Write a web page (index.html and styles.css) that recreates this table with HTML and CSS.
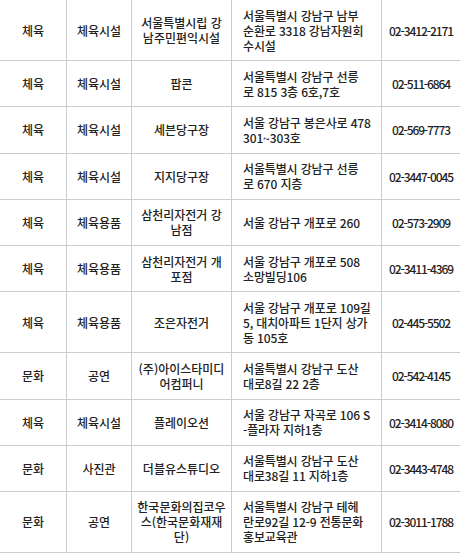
FILE: index.html
```html
<!DOCTYPE html>
<html lang="ko">
<head>
<meta charset="utf-8">
<title>강남구 체육·문화 시설 목록</title>
<link rel="stylesheet" href="styles.css">
</head>
<body>
<table class="list">
  <tbody>
    <tr><td>체육</td><td>체육시설</td><td>서울특별시립 강<br>남주민편익시설</td><td>서울특별시 강남구 남부<br>순환로 3318 강남자원회<br>수시설</td><td>02-3412-2171</td></tr>
    <tr><td>체육</td><td>체육시설</td><td>팝콘</td><td>서울특별시 강남구 선릉<br>로 815 3층 6호,7호</td><td>02-511-6864</td></tr>
    <tr><td>체육</td><td>체육시설</td><td>세븐당구장</td><td>서울 강남구 봉은사로 478<br>301~303호</td><td>02-569-7773</td></tr>
    <tr><td>체육</td><td>체육시설</td><td>지지당구장</td><td>서울특별시 강남구 선릉<br>로 670 지층</td><td>02-3447-0045</td></tr>
    <tr><td>체육</td><td>체육용품</td><td>삼천리자전거 강<br>남점</td><td>서울 강남구 개포로 260</td><td>02-573-2909</td></tr>
    <tr><td>체육</td><td>체육용품</td><td>삼천리자전거 개<br>포점</td><td>서울 강남구 개포로 508<br>소망빌딩106</td><td>02-3411-4369</td></tr>
    <tr><td>체육</td><td>체육용품</td><td>조은자전거</td><td>서울 강남구 개포로 109길<br>5, 대치아파트 1단지 상가<br>동 105호</td><td>02-445-5502</td></tr>
    <tr><td>문화</td><td>공연</td><td>(주)아이스타미디<br>어컴퍼니</td><td>서울특별시 강남구 도산<br>대로8길 22 2층</td><td>02-542-4145</td></tr>
    <tr><td>체육</td><td>체육시설</td><td>플레이오션</td><td>서울 강남구 자곡로 106 S<br>-플라자 지하1층</td><td>02-3414-8080</td></tr>
    <tr><td>문화</td><td>사진관</td><td>더블유스튜디오</td><td>서울특별시 강남구 도산<br>대로38길 11 지하1층</td><td>02-3443-4748</td></tr>
    <tr><td>문화</td><td>공연</td><td>한국문화의집코우<br>스(한국문화재재<br>단)</td><td>서울특별시 강남구 테헤<br>란로92길 12-9 전통문화<br>홍보교육관</td><td>02-3011-1788</td></tr>
  </tbody>
</table>
</body>
</html>
```
FILE: styles.css
```css
html, body {
  margin: 0;
  padding: 0;
  overflow: hidden;
  background: #fff;
}
body {
  font-family: "Noto Sans CJK KR", "Noto Sans", sans-serif;
  font-size: 12px;
  font-weight: 500;
  color: #222;
}
.list {
  border-collapse: separate;
  border-spacing: 0;
  table-layout: fixed;
  width: 460px;
}
.list td {
  box-sizing: border-box;
  border-right: 1px solid #ccc;
  border-bottom: 1px solid #ccc;
  padding: 7.6px 2px;
  line-height: 15px;
  text-align: center;
  vertical-align: middle;
}
.list td:nth-child(1) { width: 67px; }
.list td:nth-child(2) { width: 65px; }
.list td:nth-child(3) { width: 100px; }
.list td:nth-child(4) {
  width: 150px;
  text-align: left;
  padding-left: 11px;
  padding-right: 2px;
  letter-spacing: -0.15px;
}
.list td:nth-child(5) {
  width: 78px;
  border-right: none;
  letter-spacing: -1.1px;
}
```
